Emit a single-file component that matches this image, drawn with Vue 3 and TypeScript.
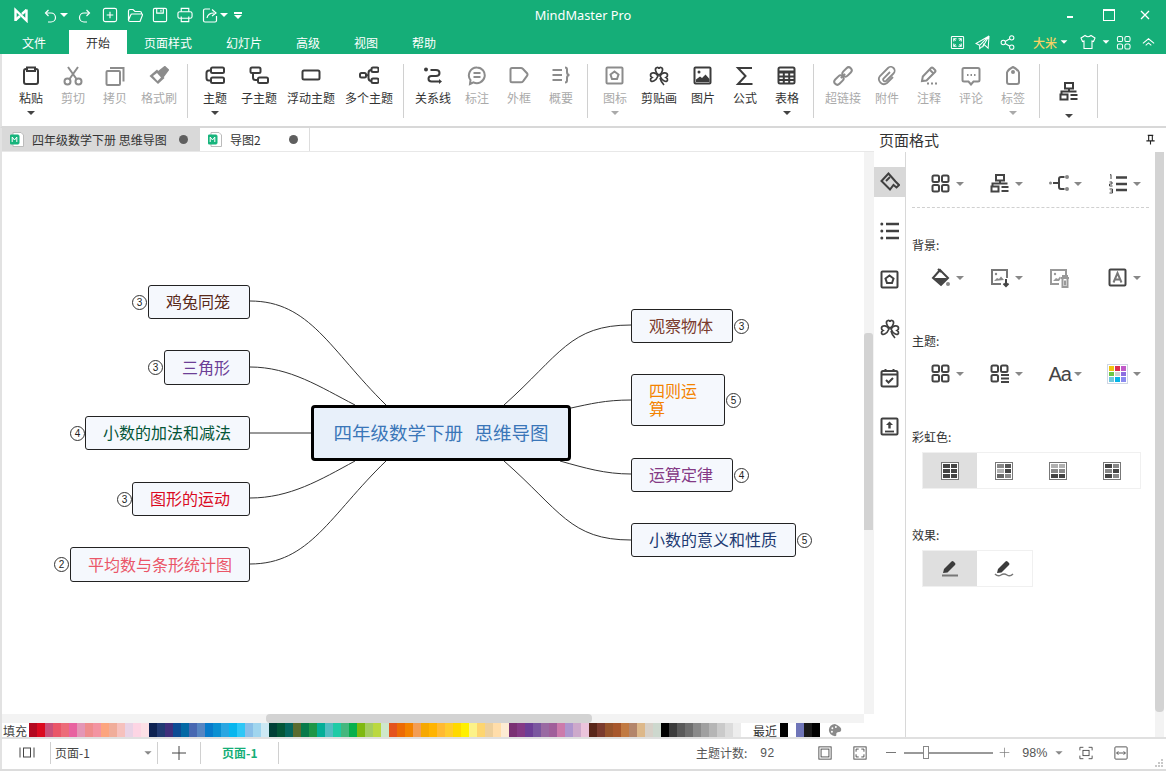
<script setup lang="ts">
const i: Record<string, string> = {
  undo: '<path d="M6.500 3 3.500 6l3 3"/><path d="M4 6h5a4.500 4.500 0 0 1 0 9H6"/>',
  redo: '<path d="M9.500 3 12.500 6l-3 3"/><path d="M12 6H7a4.500 4.500 0 0 0 0 9h3"/>',
  add: '<rect x="1.500" y="1.500" width="14" height="14" rx="2"/><path d="M8.500 5v7M5 8.500h7"/>',
  open: '<path d="M1.500 13V4q0-1.500 1.500-1.500h3l2 2h5q1.500 0 1.500 1.500v1"/><path d="M1.500 13q0 1.500 1.500 1.500h10l2.500-6.500q.3-1-1-1H5q-1 0-1.300 1z"/>',
  save: '<rect x="1.500" y="1.500" width="14" height="14" rx="1.500"/><path d="M5 2v4.500h7V2"/><path d="M9.500 3v2"/>',
  print: '<path d="M4.500 5V1.500h8V5"/><rect x="1" y="5" width="15" height="7" rx="2"/><path d="M4.500 10v5.500h8V10"/>',
  exp: '<path d="M8 2H3q-1.500 0-1.500 1.500v10q0 1.500 1.500 1.500h10q1.500 0 1.500-1.500V9"/><path d="M5 11q1-5 7-5M10 2.500l4 3.500-4 3"/>',
  full: '<rect x="1.500" y="1.500" width="13" height="13" rx="1"/><path d="M4 7V4h3M9 4h3v3M12 9v3H9M7 12H4V9"/><path d="M4 4l2 2M12 4l-2 2M12 12l-2-2M4 12l2-2"/>',
  send: '<path d="M15 1 1 9l4 2 10-10-7 12 1.500-4M15 1l-1 13-4.500-4M5 11v3.500l2.500-2"/>',
  share: '<circle cx="3.500" cy="8" r="2.300"/><circle cx="12.500" cy="3" r="2.300"/><circle cx="12.500" cy="13" r="2.300"/><path d="M5.500 7l5-3M5.500 9l5 3"/>',
  shirt: '<path d="M5 1.500 1 4l1.500 3.500L4 7v7.500h8V7l1.500.5L15 4l-4-2.500q-3 2.500-6 0z"/>',
  grid: '<rect x="1.500" y="1.500" width="5.500" height="5.500" rx="1.800"/><rect x="9.500" y="1.500" width="5.500" height="5.500" rx="1.800"/><rect x="1.500" y="9.500" width="5.500" height="5.500" rx="1.800"/><rect x="9.500" y="9.500" width="5.500" height="5.500" rx="1.800"/>',
  chev: '<path d="M2 9l6-5 6 5M5 11l3-2.500 3 2.500"/>',
  paste: '<path d="M6 3H5Q3 3 3 5v11q0 2 2 2h10q2 0 2-2V5q0-2-2-2h-1"/><path d="M6 1.500h8V5H6z"/>',
  cut: '<circle cx="4.500" cy="15.500" r="3"/><circle cx="15.500" cy="15.500" r="3"/><path d="M6.500 13 15 1M13.500 13 5 1"/>',
  copy: '<rect x="1.500" y="5" width="13.500" height="14" rx="1"/><path d="M5 2h13.500v13.500"/>',
  brush: '<path d="M10 5.500 15.800 1 19 4l-4.500 6z" fill="currentColor"/><path d="M.5 10 8 3.500l7.500 8.500-6.500 6z" fill="currentColor" stroke="none"/><path d="M4 10l4-3 4 4.500-3.500 3.500z" fill="#fff" stroke="none"/>',
  topic: '<rect x="6" y="1.500" width="13" height="5.500" rx="1.500"/><rect x="6" y="11.500" width="13" height="5.500" rx="1.500"/><path d="M6 4.500H4Q1.500 4.500 1.500 7v5q0 2.500 2.500 2.500h2"/>',
  sub: '<rect x="1.500" y="1.500" width="10" height="5.500" rx="1.500"/><rect x="9" y="11.500" width="10" height="5.500" rx="1.500"/><path d="M4 7v4.500Q4 14 6.500 14H9"/>',
  float: '<rect x="1.500" y="4.500" width="17" height="9" rx="1.500"/>',
  multi: '<rect x="1" y="7" width="6" height="4.500" rx="1.500"/><rect x="12.500" y="1.500" width="7" height="4.500" rx="1.500"/><rect x="12.500" y="12.500" width="7" height="4.500" rx="1.500"/><path d="M7 9.200h2.500M12.500 4Q9.500 4 9.500 7v5q0 3 3 3"/>',
  rel: '<circle cx="3" cy="3.500" r="2" fill="currentColor" stroke="none"/><path d="M7.500 4H13q3.500 0 3.500 3T13 10H8.500q-3 0-3 2.800t3 2.800H16"/><path d="M16 13l3 2.500-3 2.500z" fill="currentColor" stroke="none"/>',
  mark: '<path d="M10 1.500a7.800 7.800 0 1 1-3.500 14.800L3 18l.5-4A7.800 7.800 0 0 1 10 1.500z"/><path d="M6.500 7h7M6.500 11h7"/>',
  frame: '<path d="M3 2h9q1 0 1.800.7l4.200 4.500q1 1.300 0 2.600l-4 5.500q-.8 1-2 1H3q-1.500 0-1.500-1.500V3.500Q1.500 2 3 2z"/>',
  brace: '<path d="M1.500 4h9.500M1.500 9h9.500M1.500 14h9.500"/><path d="M14 1.500q2 0 2 2v2.500q0 3 2.500 3-2.500 0-2.500 3v2.500q0 2-2 2"/>',
  icon: '<rect x="1.500" y="1.500" width="16" height="16" rx="1"/><path d="M9.500 5.500l4 3-1.500 4.500H7L5.500 8.500z"/>',
  clover: '<g stroke-width="1.700"><path d="M10 9C6 7 5.500 2 8 1.500 9 1.300 10 2 10 3c0-1 1-1.700 2-1.500C14.500 2 14 7 10 9z"/><path d="M9 10C7 6 2 6 1.500 9c-.2 1.500.5 2 1.500 2.500-1 .5-1.700 1.500-1.500 2.500C2 17 7 15 9 10z"/><path d="M11 10c2-4 7-4 7.500-1 .2 1.500-.5 2-1.500 2.500 1 .5 1.700 1.500 1.500 2.500C18 17 13 15 11 10z"/><path d="M11 12q1 4 4 7"/></g>',
  pic: '<rect x="1.500" y="1.500" width="16" height="16" rx="1"/><circle cx="6" cy="6" r="1.500" fill="currentColor" stroke="none"/><path d="M3 16v-2.500l4-3 2 1.500 3.500-3.500 4 4.500V16z" fill="currentColor" stroke="none"/>',
  sum: '<path d="M16 3V2H3l7.500 8L3 18h13.500v-1"/>',
  table: '<rect x="1.500" y="1.500" width="16" height="16" rx="1.500"/><path d="M2 6h15" stroke-width="3"/><path d="M2 10.500h15M2 14h15M6.800 7v10M12.200 7v10"/>',
  link: '<g transform="rotate(-45 10 10)"><rect x="-1" y="7" width="10.500" height="6" rx="3"/><rect x="10.500" y="7" width="10.500" height="6" rx="3"/><path d="M7 10h6"/></g>',
  clip: '<path stroke-width="1.800" d="M13 6 6.500 12.500a1.800 1.800 0 0 0 2.500 2.500l7.500-7.500a3.800 3.800 0 0 0-5.500-5.500L3 10a5 5 0 0 0 7 7l6-6"/>',
  note: '<path d="M3 15l.8-4.500L12 2q1-1 2 0l2 2q1 1 0 2L7.500 14.500z"/><path d="M10.500 3.500l4 4"/><path d="M8 17.500h2M12 17.500h2M16 17.500h2"/>',
  talk: '<path d="M3 2h14q1.500 0 1.500 1.500v10.500q0 1.500-1.500 1.500h-4.500L10 18.500 7.500 15.500H3q-1.500 0-1.500-1.500V3.500Q1.500 2 3 2z"/><path d="M6 9h1.500M9.500 9H11M13 9h1.500"/>',
  tag: '<path d="M4 6.500q1-3 6-5.500 5 2.500 6 5.500V16q0 2-2 2H6q-2 0-2-2z"/><circle cx="10" cy="6" r="1" fill="currentColor"/>',
  org: '<rect x="6" y="1" width="8" height="5.500"/><rect x="1.500" y="12.500" width="7" height="5"/><path d="M10 6.500V9M2.500 12V9.500h15M11.500 13h7M11.500 17h7"/>',
  layout: '<rect x="1.500" y="1.500" width="6.500" height="6.500" rx="1.500"/><rect x="11" y="1.500" width="6.500" height="6.500" rx="1.500"/><rect x="1.500" y="11" width="6.500" height="6.500" rx="1.500"/><rect x="11" y="11" width="6.500" height="6.500" rx="1.500"/>',
  fish: '<circle cx="1.500" cy="9" r="1.500" fill="#888" stroke="none"/><circle cx="18" cy="3" r="2" fill="#888" stroke="none"/><circle cx="18" cy="15" r="2" fill="#888" stroke="none"/><path d="M4 9h5M15.500 3H12q-2 0-2 2v8q0 2 2 2h3.500"/>',
  nums: '<path d="M8 3.500h11M8 10h11M8 16h11" stroke-width="2.600"/><path d="M2 1l1-.5V5M1.500 8h2.500v2H1.500v2h3M1.500 15h3v4h-3M2.500 17h2" stroke-width="1"/>',
  fill: '<path d="M2 10l7-8 8 8-7 7z"/><path d="M3 10h13l-6 6.500z" fill="currentColor" stroke="none"/><circle cx="17" cy="16" r="2" fill="#888" stroke="none"/><path d="M7 1l3 3"/>',
  bgpic: '<path d="M17 10V2H2v14h9" stroke="#777"/><circle cx="6" cy="6" r="1.200" fill="#888" stroke="none"/><path d="M4 13l3-3 2 1 2-2.500 3 3.500z" fill="#888" stroke="none"/><path d="M16 11v7M13.500 15.500l2.500 2.500 2.500-2.500"/>',
  delpic: '<path d="M17 7V2H2v14h8"/><circle cx="6" cy="6" r="1.200" fill="currentColor" stroke="none"/><path d="M4 13l3-3 2 1 2-2.500 1 1.500-2 3z" fill="currentColor" stroke="none"/><path d="M12 10h8M14 10V8h4v2M13.500 11v8h5v-8M16 12.500v5"/>',
  txtbg: '<rect x="1.500" y="1.500" width="16" height="16" rx="1"/><path d="M5.500 14.500 9.500 5l4 9.500M7 11.500h5" stroke="#777"/>',
  layout2: '<rect x="1.500" y="1.500" width="6.500" height="6.500" rx="1.500"/><rect x="11" y="1.500" width="6.500" height="6.500" rx="1.500"/><rect x="1.500" y="11" width="6.500" height="6.500" rx="1.500"/><path d="M11 11h8M11 14.500h8M11 18h8"/>',
  side1: '<path d="M8.500 1.500 1.500 9 10 17.500l3.500-4.500 3 2.500 2.500-2.500-3.500-3.500z"/><path d="M6 9l4-4"/>',
  side2: '<path d="M6 3h13M6 10h13M6 17h13" stroke-width="2.600"/><circle cx="1.800" cy="3" r="1.500" fill="currentColor" stroke="none"/><circle cx="1.800" cy="10" r="1.500" fill="currentColor" stroke="none"/><circle cx="1.800" cy="17" r="1.500" fill="currentColor" stroke="none"/>',
  cal: '<rect x="1.500" y="3" width="16" height="15.500" rx="1.500"/><path d="M2 6.500h15M5.500 1v3M13.500 1v3"/><path d="M6 12l2.500 2.500L13 10"/>',
  up: '<rect x="1.500" y="1.500" width="16" height="16" rx="1"/><path d="M5 14.500h9" stroke-width="1.800"/><path d="M9.500 11.500V7" stroke-width="2.400"/><path d="M6 8l3.500-3.500L13 8z" fill="currentColor" stroke="none"/>',
  pen: '<path d="M3 14l1-4L11.500 2.500q1-1 2 0l1.500 1.500q1 1 0 2L7.500 13.500z" fill="currentColor" stroke="none"/><path d="M2 16.500H18" stroke="#777" stroke-width="2"/>',
  pen2: '<path d="M3 14l1-4L11.500 2.500q1-1 2 0l1.500 1.500q1 1 0 2L7.500 13.500z" fill="currentColor" stroke="none"/><path d="M1 15q3 3 6 1t6 0 6-1" stroke="#777" stroke-width="1.500"/>',
  pages: '<rect x="4.500" y="2" width="7" height="9"/><path d="M1 1.500v10M15 1.500v10"/>',
  plus: '<path d="M8 1v14M1 8h14"/>',
  fit: '<rect x="1" y="1" width="14" height="14"/><rect x="3.500" y="3.500" width="9" height="9"/>',
  fullS: '<rect x="1" y="1" width="14" height="14"/><path d="M3.500 6.500v-3h3M9.500 3.500h3v3M12.500 9.500v3h-3M6.500 12.500h-3v-3"/>',
  focus: '<path d="M1 5V1.500h4M11 1.500h4V5M15 11v3.500h-4M5 14.500H1V11"/><rect x="4.500" y="5" width="7" height="6"/>',
  width: '<rect x="1" y="1" width="14" height="14" rx="1"/><path d="M3 8h10M5 6 3 8l2 2M11 6l2 2-2 2"/>',
  palette: '<path d="M8 1a7 7 0 1 0 0 14q2 0 1.500-2t1.500-2.500 3-.5q1.500-1 1-3.500T8 1z" fill="currentColor" stroke="none"/><circle cx="5" cy="6" r="1.100" fill="#fff" stroke="none"/><circle cx="9" cy="4.500" r="1.100" fill="#fff" stroke="none"/><circle cx="4.500" cy="10" r="1.100" fill="#fff" stroke="none"/>',
  pin: '<path d="M3 1.500h6M4 1.500v5.500M8 1.500v5.500M1.500 7.500h9M6 8v3.500"/>'
}

interface Tool { label: string; icon: string; off?: boolean; caret?: boolean }
const groups: Tool[][] = [
  [{ label: '粘贴', icon: 'paste', caret: true }, { label: '剪切', icon: 'cut', off: true }, { label: '拷贝', icon: 'copy', off: true }, { label: '格式刷', icon: 'brush', off: true }],
  [{ label: '主题', icon: 'topic', caret: true }, { label: '子主题', icon: 'sub' }, { label: '浮动主题', icon: 'float' }, { label: '多个主题', icon: 'multi' }],
  [{ label: '关系线', icon: 'rel' }, { label: '标注', icon: 'mark', off: true }, { label: '外框', icon: 'frame', off: true }, { label: '概要', icon: 'brace', off: true }],
  [{ label: '图标', icon: 'icon', off: true, caret: true }, { label: '剪贴画', icon: 'clover' }, { label: '图片', icon: 'pic' }, { label: '公式', icon: 'sum' }, { label: '表格', icon: 'table', caret: true }],
  [{ label: '超链接', icon: 'link', off: true }, { label: '附件', icon: 'clip', off: true }, { label: '注释', icon: 'note', off: true }, { label: '评论', icon: 'talk', off: true }, { label: '标签', icon: 'tag', off: true, caret: true }]
]
const menus = ['文件', '开始', '页面样式', '幻灯片', '高级', '视图', '帮助']

const OX = 2
const OY = 152
interface MapNode { text: string; color: string; x: number; y: number; w: number; h: number; n: number; cx: number; cy: number; narrow?: boolean }
const nodes: MapNode[] = [
  { text: '鸡兔同笼', color: '#5a2a1a', x: 148, y: 285, w: 102, h: 34, n: 3, cx: 139, cy: 302 },
  { text: '三角形', color: '#6c3f96', x: 164, y: 350, w: 86, h: 35, n: 3, cx: 155, cy: 367 },
  { text: '小数的加法和减法', color: '#045537', x: 85, y: 416, w: 165, h: 34, n: 4, cx: 77, cy: 433 },
  { text: '图形的运动', color: '#db0a1f', x: 132, y: 482, w: 118, h: 34, n: 3, cx: 124, cy: 499 },
  { text: '平均数与条形统计图', color: '#ea5668', x: 70, y: 547, w: 180, h: 35, n: 2, cx: 61, cy: 564 },
  { text: '观察物体', color: '#7a3b2e', x: 631, y: 309, w: 102, h: 34, n: 3, cx: 741, cy: 326 },
  { text: '四则运算', color: '#f38300', x: 631, y: 374, w: 94, h: 52, n: 5, cx: 733, cy: 400, narrow: true },
  { text: '运算定律', color: '#843a85', x: 631, y: 458, w: 102, h: 34, n: 4, cx: 741, cy: 475 },
  { text: '小数的意义和性质', color: '#213a72', x: 631, y: 523, w: 165, h: 34, n: 5, cx: 804, cy: 540 }
]
const curves = [
  'M250 301C310 301 330 350 386 405', 'M250 367C290 367 320 387 355 405', 'M250 433H311',
  'M250 498C290 498 320 480 355 461', 'M250 564C310 564 330 515 386 461',
  'M631 325C570 325 560 355 504 405', 'M631 400C605 400 590 404 571 408',
  'M631 474C605 474 585 468 560 461', 'M631 540C570 540 560 510 504 461'
]
const boxStyle = (n: MapNode) => ({ left: n.x - OX + 'px', top: n.y - OY + 'px', width: n.w + 'px', height: n.h + 'px', color: n.color })
const dotStyle = (n: MapNode) => ({ left: n.cx - 7 - OX + 'px', top: n.cy - 7 - OY + 'px' })

const swatches = ['#b3081f', '#db0a1f', '#c9507a', '#ea5668', '#ec6b78', '#e862a0', '#e496b6', '#ef8d8d', '#f394a2', '#fca57e', '#f0ad9a', '#f6c1bd', '#e9d3e6', '#fdd5e4', '#fce0e6',
  '#0e2352', '#213a72', '#3f2f7c', '#0d4b94', '#0268a4', '#4767b1', '#5685c2', '#077bcb', '#0a90d2', '#29a6e2', '#08b6ee', '#2fc7f6', '#8abfe8', '#a0d5ee', '#cde9f4',
  '#013f36', '#045537', '#06665e', '#5a6b2f', '#077a4a', '#1e9647', '#05ae97', '#53bdc1', '#1fcba6', '#45b77e', '#07b04d', '#7fb911', '#a4cd5f', '#bbd840', '#cee7cb',
  '#e4531e', '#ec6b05', '#f38300', '#f39d54', '#f6a800', '#ffb400', '#ffba33', '#ffcc2f', '#ffd900', '#fff000', '#fcf288', '#fdd56f', '#edcf9c', '#ffddaa', '#fdebd3',
  '#7a3174', '#843a85', '#6c3f96', '#7a579f', '#996aa2', '#a05f9a', '#cc7bab', '#ae96ce', '#cda9cb', '#ebc4db',
  '#59271a', '#7a3b2e', '#96532b', '#a7572c', '#c17a42', '#b3856b', '#ddb88a', '#d7d0c8', '#cdd8ce',
  '#000000', '#3b3b3b', '#595959', '#6e6e6e', '#898989', '#a0a0a0', '#b5b5b5', '#cacaca', '#dcdcdc', '#ededed']
const recent = ['#000000', '#ffffff', '#6f75b8', '#1a1a1a', '#000000']
const palette = ['#f1c40f', '#dc2f4f', '#c05ac8', '#6cc644', '#d3d3d3', '#8c6ee0', '#70c8dc', '#05b4e6', '#8a8af0']
const rainbow = [
  ['#444', '#444', '#444', '#444', '#444', '#444'],
  ['#888', '#555', '#b0b0b0', '#444', '#666', '#888'],
  ['#b0b0b0', '#b0b0b0', '#888', '#888', '#444', '#444'],
  ['#444', '#888', '#888', '#444', '#444', '#888']
]
</script>

<template>
  <div class="app">
    <header class="top">
      <div class="title-row">
        <div class="quick">
          <svg class="logo" viewBox="0 0 16 16"><path d="M2.500 14V3l11 10.500V2.500" /><path d="M2.500 13 7 9M13.500 3 9 7" /></svg>
          <svg class="q" viewBox="0 0 16 16" v-html="i.undo"></svg><i class="car w"></i>
          <svg class="q" viewBox="0 0 16 16" v-html="i.redo"></svg>
          <svg class="q" viewBox="0 0 17 17" v-html="i.add"></svg>
          <svg class="q" viewBox="0 0 16 16" v-html="i.open"></svg>
          <svg class="q" viewBox="0 0 17 17" v-html="i.save"></svg>
          <svg class="q" viewBox="0 0 17 17" v-html="i.print"></svg>
          <svg class="q" viewBox="0 0 16 16" v-html="i.exp"></svg><i class="car w"></i>
          <span class="more"><i></i><i class="car w"></i></span>
        </div>
        <div class="app-name">MindMaster Pro</div>
        <div class="win">
          <span class="min"></span><span class="max"></span>
          <svg class="close" viewBox="0 0 10 10"><path d="M1 1l8 8M9 1 1 9" /></svg>
        </div>
      </div>
      <nav class="menu-row">
        <span v-for="m in menus" :key="m" class="menu" :class="{ on: m === '开始', long: m === '页面样式', mid: m === '幻灯片', first: m === '文件' }">{{ m }}</span>
        <div class="menu-tools">
          <svg class="t" viewBox="0 0 16 16" v-html="i.full"></svg>
          <svg class="t" viewBox="0 0 16 16" v-html="i.send"></svg>
          <svg class="t" viewBox="0 0 16 16" v-html="i.share"></svg>
          <span class="user">大米</span><i class="car w"></i>
          <svg class="t shirt" viewBox="0 0 16 16" v-html="i.shirt"></svg><i class="car w"></i>
          <svg class="t tg" viewBox="0 0 16 16" v-html="i.grid"></svg>
          <svg class="t" viewBox="0 0 16 16" v-html="i.chev"></svg>
        </div>
      </nav>
    </header>

    <section class="ribbon">
      <template v-for="(g, gi) in groups" :key="gi">
        <div v-for="t in g" :key="t.label" class="tool" :class="['len' + t.label.length, { off: t.off }]">
          <svg class="ic" viewBox="0 0 20 20" v-html="i[t.icon]"></svg>
          <span class="lbl">{{ t.label }}</span>
          <i v-if="t.caret" class="car"></i>
        </div>
        <span class="sep"></span>
      </template>
      <div class="tool len3 org">
        <svg class="ic" viewBox="0 0 20 20" v-html="i.org"></svg>
        <i class="car"></i>
      </div>
      <span class="sep"></span>
    </section>

    <div class="body">
      <main class="work">
        <div class="doc-tabs">
          <div class="doc on">
            <svg class="file" viewBox="0 0 14 15"><path d="M3 .5h8l2.500 2.500v11.500H3z" fill="#fff" stroke="#bbb" /><rect x="0" y="3" width="9" height="9" rx="1" fill="#17b47c" /><path d="M2.200 10V5l2.300 3 2.300-3v5" fill="none" stroke="#fff" /></svg>
            <span class="doc-name">四年级数学下册 思维导图</span><b class="dot"></b>
          </div>
          <div class="doc second">
            <svg class="file" viewBox="0 0 14 15"><path d="M3 .5h8l2.500 2.500v11.500H3z" fill="#fff" stroke="#bbb" /><rect x="0" y="3" width="9" height="9" rx="1" fill="#17b47c" /><path d="M2.200 10V5l2.300 3 2.300-3v5" fill="none" stroke="#fff" /></svg>
            <span class="doc-name">导图2</span><b class="dot"></b>
          </div>
        </div>
        <div class="canvas-row">
          <div class="canvas">
            <svg class="wires" viewBox="2 152 862 562"><path v-for="c in curves" :key="c" :d="c" /></svg>
            <div class="root-node">四年级数学下册&nbsp;&nbsp;思维导图</div>
            <template v-for="n in nodes" :key="n.text">
              <div class="node" :class="{ narrow: n.narrow }" :style="boxStyle(n)"><span>{{ n.text }}</span></div>
              <div class="count" :style="dotStyle(n)">{{ n.n }}</div>
            </template>
          </div>
          <div class="vbar"><div class="vthumb"></div></div>
        </div>
        <div class="hbar"><div class="hthumb"></div></div>
        <div class="colors">
          <span class="fill-lbl">填充</span>
          <i v-for="(s, si) in swatches" :key="si" class="sw" :style="{ background: s }"></i>
          <span class="recent-lbl">最近</span>
          <i v-for="(s, si) in recent" :key="'r' + si" class="sw" :style="{ background: s }"></i>
          <svg class="pal" viewBox="0 0 16 16" v-html="i.palette"></svg>
        </div>
      </main>

      <aside class="side">
        <div class="side-head"><span>页面格式</span><svg class="pin" viewBox="0 0 12 12" v-html="i.pin"></svg></div>
        <div class="side-main">
          <div class="rail">
            <div class="rail-btn on"><svg viewBox="0 0 20 20" v-html="i.side1"></svg></div>
            <div class="rail-btn"><svg viewBox="0 0 20 20" v-html="i.side2"></svg></div>
            <div class="rail-btn"><svg viewBox="0 0 20 20" v-html="i.icon"></svg></div>
            <div class="rail-btn"><svg viewBox="0 0 20 20" v-html="i.clover"></svg></div>
            <div class="rail-btn"><svg viewBox="0 0 20 20" v-html="i.cal"></svg></div>
            <div class="rail-btn"><svg viewBox="0 0 20 20" v-html="i.up"></svg></div>
          </div>
          <div class="props">
            <div class="row r1">
              <div class="opt"><svg viewBox="0 0 20 20" v-html="i.layout"></svg><i class="car g"></i></div>
              <div class="opt"><svg viewBox="0 0 20 20" v-html="i.org"></svg><i class="car g"></i></div>
              <div class="opt"><svg viewBox="0 0 20 20" v-html="i.fish"></svg><i class="car g"></i></div>
              <div class="opt"><svg viewBox="0 0 20 20" v-html="i.nums"></svg><i class="car g"></i></div>
            </div>
            <div class="dash"></div>
            <h4 class="h-bg">背景:</h4>
            <div class="row">
              <div class="opt"><svg viewBox="0 0 20 20" v-html="i.fill"></svg><i class="car g"></i></div>
              <div class="opt"><svg viewBox="0 0 20 20" v-html="i.bgpic"></svg><i class="car g"></i></div>
              <div class="opt dim"><svg viewBox="0 0 20 20" v-html="i.delpic"></svg></div>
              <div class="opt"><svg viewBox="0 0 20 20" v-html="i.txtbg"></svg><i class="car g"></i></div>
            </div>
            <h4 class="h-topic">主题:</h4>
            <div class="row">
              <div class="opt"><svg viewBox="0 0 20 20" v-html="i.layout"></svg><i class="car g"></i></div>
              <div class="opt"><svg viewBox="0 0 20 20" v-html="i.layout2"></svg><i class="car g"></i></div>
              <div class="opt"><span class="aa">Aa</span><i class="car g"></i></div>
              <div class="opt">
                <div class="palette"><i v-for="p in palette" :key="p" :style="{ background: p }"></i></div>
                <i class="car g"></i>
              </div>
            </div>
            <h4 class="h-rain">彩虹色:</h4>
            <div class="seg">
              <div v-for="(r, ri) in rainbow" :key="ri" class="cell" :class="{ on: ri === 0 }">
                <div class="mini"><i v-for="(c, ci) in r" :key="ci" :style="{ background: c }"></i></div>
              </div>
            </div>
            <h4 class="h-fx">效果:</h4>
            <div class="seg short">
              <div class="cell on"><svg viewBox="0 0 20 20" v-html="i.pen"></svg></div>
              <div class="cell"><svg viewBox="0 0 20 20" v-html="i.pen2"></svg></div>
            </div>
          </div>
          <div class="pbar"><div class="pthumb"></div></div>
        </div>
      </aside>
    </div>

    <footer class="status">
      <svg class="s pages" viewBox="0 0 16 13" v-html="i.pages"></svg>
      <span class="bar b1"></span>
      <span class="pg">页面-1</span>
      <i class="car g"></i>
      <span class="bar b2"></span>
      <svg class="s plus" viewBox="0 0 16 16" v-html="i.plus"></svg>
      <span class="bar b3"></span>
      <span class="pg-on">页面-1</span>
      <span class="bar b4"></span>
      <span class="cnt">主题计数:</span>
      <span class="cnt-n">92</span>
      <svg class="s fit" viewBox="0 0 16 16" v-html="i.fit"></svg>
      <svg class="s fulls" viewBox="0 0 16 16" v-html="i.fullS"></svg>
      <span class="minus"></span>
      <div class="slider"><span class="thumb"></span></div>
      <svg class="s zplus" viewBox="0 0 16 16" v-html="i.plus"></svg>
      <span class="pct">98%</span>
      <i class="car g"></i>
      <svg class="s focus" viewBox="0 0 16 16" v-html="i.focus"></svg>
      <svg class="s width" viewBox="0 0 16 16" v-html="i.width"></svg>
      <svg class="grip" viewBox="0 0 10 10"><path d="M7 1h2v2H7zM4 4h2v2H4zM7 4h2v2H7zM1 7h2v2H1zM4 7h2v2H4zM7 7h2v2H7z" /></svg>
    </footer>
  </div>
</template>

<style scoped>
.app { width: 1166px; height: 771px; display: flex; flex-direction: column; background: #fff; overflow: hidden; box-sizing: border-box; border-bottom: 2px solid #dcdcdc; font-family: "Noto Sans CJK SC", "Liberation Sans", sans-serif; font-size: 12px; color: #333; }
svg { fill: none; stroke: currentColor; stroke-width: 2; display: block; flex: none; }
i { display: block; }
.car { width: 0; height: 0; border-left: 4px solid transparent; border-right: 4px solid transparent; border-top: 4px solid #444; flex: none; }
.car.w { border-top-color: #fff; }
.car.g { border-top-color: #888; }

.top { height: 54px; background: #15ae78; color: #fff; flex: none; }
.title-row { height: 30px; display: grid; grid-template-columns: 1fr auto 1fr; align-items: center; }
.quick { display: flex; align-items: center; padding-left: 13px; }
.quick svg { stroke-width: 1.200; }
.quick .logo { width: 16px; height: 16px; stroke-width: 2.400; }
.q { width: 16px; height: 16px; margin-left: 9px; }
.logo + .q { margin-left: 13px; }
.quick .car { margin-left: 2px; }
.more { display: flex; flex-direction: column; align-items: center; margin-left: 6px; gap: 1px; }
.more i:first-child { width: 8px; height: 2px; background: #fff; }
.quick .more .car { margin-left: 0; }
.app-name { font-family: "Noto Sans", "Liberation Sans", sans-serif; font-size: 12.800px; }
.win { display: flex; justify-content: flex-end; align-items: center; padding-right: 16px; }
.min { width: 6px; height: 2px; background: #fff; margin-top: 4px; }
.max { width: 10px; height: 9px; border: 1px solid #fff; border-top-width: 2px; margin-left: 30px; box-sizing: content-box; }
.close { width: 10px; height: 10px; margin-left: 25px; stroke-width: 1.300; }

.menu-row { height: 24px; display: flex; align-items: stretch; }
.menu { width: 58px; text-align: center; line-height: 26px; }
.menu.first { margin: 0 6px 0 5px; }
.menu.long { width: 82px; }
.menu.mid { width: 70px; }
.menu.on { background: #fff; color: #333; }
.menu-tools { margin-left: auto; display: flex; align-items: center; padding-right: 10px; }
.t { width: 15px; height: 15px; margin-left: 10px; stroke-width: 1.100; }
.user { color: #f7d264; margin-left: 18px; margin-right: 3px; font-size: 12px; font-weight: 500; }
.shirt { margin-left: 12px; margin-right: 6px; width: 16px; height: 16px; }
.tg { margin-left: 6px; }
.menu-tools .car { transform: scale(.85); }

.ribbon { height: 74px; box-sizing: border-box; flex: none; display: flex; padding-left: 8px; border-bottom: 2px solid #d8d8d8; border-left: 2px solid #e2e2e2; }
.tool { display: flex; flex-direction: column; align-items: center; padding-top: 12px; color: #3c3c3c; flex: none; }
.tool.off { color: #8c8c8c; }
.tool.off .lbl { color: #aaa; }
.tool.off .car { border-top-color: #aaa; }
.len2 { width: 42px; }
.len3 { width: 46px; }
.len4 { width: 58px; }
.ic { width: 20px; height: 20px; }
.lbl { line-height: 16px; margin-top: 4px; color: #333; white-space: nowrap; }
.tool .car { margin-top: 5px; }
.tool.org { padding-top: 28px; }
.tool.org .car { margin-top: 12px; }
.sep { width: 1px; height: 54px; background: #d0d0d0; margin: 10px 6px 0 5px; flex: none; }

.body { flex: 1; min-height: 0; display: flex; border-left: 2px solid #e2e2e2; }
.work { width: 872px; flex: none; display: flex; flex-direction: column; }
.doc-tabs { height: 24px; box-sizing: border-box; display: flex; border-bottom: 1px solid #e8e8e8; flex: none; }
.doc { display: flex; align-items: center; color: #333; position: relative; padding-left: 8px; box-sizing: border-box; }
.doc.on { width: 198px; background: #d9d9d9; }
.doc.second { width: 110px; border-right: 1px solid #ddd; }
.file { width: 14px; height: 15px; stroke-width: 1; color: #17b47c; }
.doc-name { margin-left: 8px; white-space: nowrap; }
.dot { width: 9px; height: 9px; border-radius: 50%; background: #5f5f5f; position: absolute; top: 7px; right: 12px; }
.doc.second .dot { right: 11px; }
.canvas-row { flex: 1; min-height: 0; display: flex; }
.canvas { flex: 1; position: relative; background: #fff; overflow: hidden; }
.wires { position: absolute; left: 0; top: 0; width: 862px; height: 562px; stroke: #333; stroke-width: 1; }
.root-node { position: absolute; left: 309px; top: 253px; width: 260px; height: 56px; box-sizing: border-box; padding-bottom: 2px; border: 3px solid #000; border-radius: 4px; background: #e8f0fa; color: #3a76b8; font-size: 18.500px; display: flex; align-items: center; justify-content: center; word-spacing: 1.500px; white-space: nowrap; }
.node { position: absolute; box-sizing: border-box; border: 1px solid #222; border-radius: 3px; background: #f5f8fd; font-size: 16px; line-height: 18px; display: flex; align-items: center; padding: 0 0 2px 17px; white-space: nowrap; }
.node.narrow { white-space: normal; }
.node.narrow span { width: 50px; display: block; word-break: break-all; }
.count { position: absolute; width: 15px; height: 15px; box-sizing: border-box; border: 1px solid #333; border-radius: 50%; background: #fff; font-size: 10px; line-height: 13px; text-align: center; color: #222; font-family: "Liberation Sans", sans-serif; }
.vbar { width: 10px; background: #f3f3f3; flex: none; position: relative; }
.vthumb { position: absolute; left: 0; right: 1px; top: 181px; height: 197px; background: #d3d3d3; border-radius: 3px 3px 0 0; }
.hbar { height: 9px; background: #f3f3f3; position: relative; flex: none; margin-right: 10px; }
.hthumb { position: absolute; left: 264px; width: 326px; top: 0; bottom: 0; background: #d3d3d3; border-radius: 4px; }
.colors { height: 14px; display: flex; align-items: stretch; flex: none; }
.fill-lbl { width: 27px; line-height: 16px; padding-left: 1px; box-sizing: border-box; color: #444; }
.sw { width: 8px; flex: none; }
.recent-lbl { margin-left: 12px; width: 27px; line-height: 16px; color: #333; }
.pal { width: 14px; height: 14px; margin-left: 8px; color: #8a8a8a; }

.side { flex: 1; min-width: 0; display: flex; flex-direction: column; }
.side-head { height: 24px; display: flex; align-items: center; justify-content: space-between; padding: 0 10px 2px 5px; box-sizing: border-box; font-size: 15px; flex: none; }
.pin { width: 11px; height: 11px; stroke-width: 1.200; color: #222; }
.side-main { flex: 1; min-height: 0; display: flex; }
.rail { width: 31px; padding-top: 15px; box-sizing: border-box; flex: none; display: flex; flex-direction: column; gap: 19px; align-items: stretch; }
.rail-btn { height: 30px; display: flex; align-items: center; justify-content: center; color: #404040; }
.rail-btn.on { background: #d8d8d8; }
.rail-btn svg { width: 20px; height: 20px; }
.props { flex: 1; border-left: 1px solid #d8d8d8; padding: 0 6px; min-width: 0; }
.row { display: grid; grid-template-columns: repeat(4, 59px); height: 20px; margin-top: 15px; }
.row.r1 { margin-top: 22px; }
.opt { display: flex; align-items: center; color: #444; padding-left: 18.500px; position: relative; }
.opt svg { width: 20px; height: 20px; }
.opt .car { position: absolute; left: 44px; }
.opt.dim { color: #999; }
.dash { height: 0; border-top: 1px dashed #d0d0d0; margin: 13px 0 0; }
h4 { margin: 0; font-size: 12px; font-weight: 400; line-height: 16px; color: #333; }
.h-bg { margin-top: 29px; }
.h-topic { margin-top: 45px; }
.h-rain { margin-top: 45px; }
.h-fx { margin-top: 38px; }
.aa { font-family: "Liberation Sans", sans-serif; font-size: 20px; color: #444; line-height: 20px; letter-spacing: -1px; }
.palette { width: 21px; height: 20px; flex: none; box-sizing: border-box; border: 1px solid #cfd6e4; display: grid; grid-template-columns: repeat(3, 1fr); gap: 1px; padding: 1px; margin-left: -.5px; }
.seg { margin: 7px 0 0 10px; width: 219px; height: 37px; box-sizing: border-box; border: 1px solid #f0f0f0; display: flex; }
.seg.short { width: 111px; }
.cell { width: 54px; display: flex; align-items: center; justify-content: center; color: #3c3c3c; }
.cell.on { background: #dfdfdf; }
.cell svg { width: 20px; height: 20px; }
.mini { width: 18px; height: 18px; box-sizing: border-box; border: 1px solid #777; display: grid; grid-template-columns: 1fr 1fr; gap: 1px; padding: 1px; background: #fff; }
.pbar { width: 9px; margin-left: auto; background: #f3f3f3; flex: none; margin-right: 2px; }
.pthumb { height: 560px; background: #d3d3d3; border-radius: 0 0 4px 4px; }

.status { height: 32px; flex: none; box-sizing: border-box; padding-bottom: 3px; border-top: 2px solid #e0e0e0; border-left: 2px solid #e2e2e2; display: flex; align-items: center; position: relative; color: #444; }
.s { width: 16px; height: 16px; stroke-width: 1; }
.pages { margin-left: 17px; height: 13px; }
.bar { width: 1px; height: 22px; background: #d0d0d0; flex: none; }
.b1 { margin-left: 15px; }
.pg { margin-left: 4px; width: 89px; }
.status > .car { transform: scale(.9); }
.b2 { margin-left: 5px; }
.plus { margin-left: 13px; }
.b3 { margin-left: 13px; }
.pg-on { margin-left: 21px; color: #15ae78; font-weight: 700; width: 56px; }
.cnt { margin-left: 417px; color: #555; }
.cnt-n { margin-left: 13px; width: 26px; color: #555; font-family: "Liberation Sans", sans-serif; font-size: 12px; letter-spacing: .6px; }
.fit { margin-left: 32px; width: 14px; height: 14px; }
.fulls { margin-left: 21px; width: 14px; height: 14px; }
.minus { width: 10px; height: 1px; background: #777; margin-left: 19px; }
.slider { width: 89px; height: 2px; background: #999; margin-left: 8px; position: relative; }
.thumb { position: absolute; left: 19px; top: -6px; width: 6px; height: 13px; box-sizing: border-box; border: 1px solid #888; background: #fff; }
.zplus { margin-left: 6px; width: 11px; height: 11px; color: #777; }
.pct { margin-left: 12px; width: 33px; color: #555; font-family: "Liberation Sans", sans-serif; font-size: 12.500px; }
.focus { margin-left: 16px; width: 14px; height: 14px; }
.width { margin-left: 21px; width: 14px; height: 14px; }
.grip { position: absolute; right: 2px; bottom: 1px; width: 10px; height: 10px; fill: #c8c8c8; stroke: none; }
</style>

<style>
html, body { margin: 0; padding: 0; background: #fff; }
</style>
